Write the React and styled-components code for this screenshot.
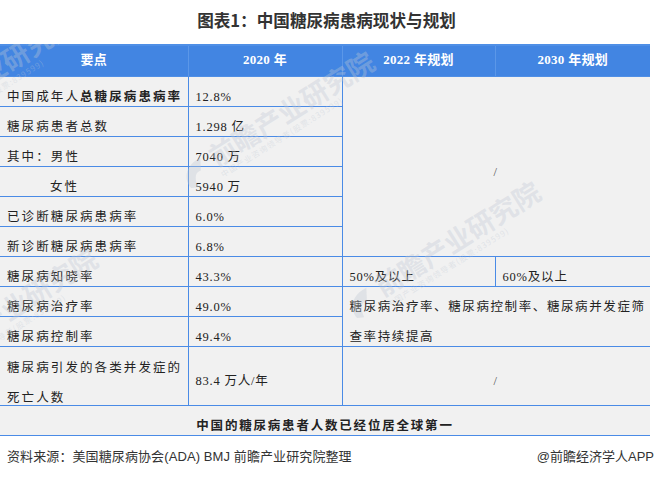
import React from 'react';
import styled, { createGlobalStyle } from 'styled-components';

const GlobalStyle = createGlobalStyle`
  html, body {
    margin: 0;
    padding: 0;
    background: #ffffff;
  }
`;

const rows = [
  { label: '中国成年人', strong: '总糖尿病患病率', value: '12.8%' },
  { label: '糖尿病患者总数', value: '1.298 亿' },
  { label: '其中：男性', value: '7040 万' },
  { label: '女性', value: '5940 万', indent: true },
  { label: '已诊断糖尿病患病率', value: '6.0%' },
  { label: '新诊断糖尿病患病率', value: '6.8%' },
];

const marks = [
  { x: -134, y: 16 },
  { x: 165, y: 54 },
  { x: 331, y: 184 },
  { x: -112, y: 251 },
];

const App = () => (
  <Page>
    <GlobalStyle />
    <Title>图表1：中国糖尿病患病现状与规划</Title>
    <TableWrap>
      <Table>
        <colgroup>
          <col width='188' />
          <col width='154' />
          <col width='153' />
          <col width='155' />
        </colgroup>
        <thead>
          <tr>
            <HeadCell>要点</HeadCell>
            <HeadCell>2020 年</HeadCell>
            <HeadCell>2022 年规划</HeadCell>
            <HeadCell>2030 年规划</HeadCell>
          </tr>
        </thead>
        <tbody>
          {rows.map((row, index) => (
            <tr key={row.label}>
              <Cell $indent={row.indent}>
                {row.label}
                {row.strong && <strong>{row.strong}</strong>}
              </Cell>
              <ValueCell>{row.value}</ValueCell>
              {index === 0 && (
                <SlashCell colSpan={2} rowSpan={6}>
                  /
                </SlashCell>
              )}
            </tr>
          ))}
          <tr>
            <Cell>糖尿病知晓率</Cell>
            <ValueCell>43.3%</ValueCell>
            <ValueCell>50%及以上</ValueCell>
            <ValueCell>60%及以上</ValueCell>
          </tr>
          <tr>
            <Cell>糖尿病治疗率</Cell>
            <ValueCell>49.0%</ValueCell>
            <NoteCell colSpan={2} rowSpan={2}>
              <LineBlock $height={53}>
                糖尿病治疗率、糖尿病控制率、糖尿病并发症筛查率持续提高
              </LineBlock>
            </NoteCell>
          </tr>
          <tr>
            <Cell>糖尿病控制率</Cell>
            <ValueCell>49.4%</ValueCell>
          </tr>
          <TallRow>
            <TallCell>
              <LineBlock $height={52}>糖尿病引发的各类并发症的死亡人数</LineBlock>
            </TallCell>
            <ValueCell>83.4 万人/年</ValueCell>
            <SlashCell colSpan={2}>/</SlashCell>
          </TallRow>
          <tr>
            <SummaryCell colSpan={4}>中国的糖尿病患者人数已经位居全球第一</SummaryCell>
          </tr>
        </tbody>
      </Table>
      <MarkLayer>
        {marks.map((mark) => (
          <Mark key={mark.x} $x={mark.x} $y={mark.y}>
            <MarkLogo viewBox='0 0 40 40'>
              <path d='M4 32C2 16 14 4 34 6L26 20C20 18 14 22 12 36Z' />
            </MarkLogo>
            <MarkText>
              <MarkName>前瞻产业研究院</MarkName>
              <MarkSub>中国产业咨询领导者(股票:839599)</MarkSub>
            </MarkText>
          </Mark>
        ))}
      </MarkLayer>
    </TableWrap>
    <Footer>
      <span>资料来源：美国糖尿病协会(ADA) BMJ 前瞻产业研究院整理</span>
      <Credit>@前瞻经济学人APP</Credit>
    </Footer>
  </Page>
);

export default App;

const Page = styled.div`
  width: 654px;
  height: 478px;
  overflow: hidden;
  background: #ffffff;
`;

const Title = styled.h1`
  margin: 0;
  height: 44px;
  text-align: center;
  padding-right: 1px;
  color: #333333;
  font: 700 16.6px/41px 'Noto Sans CJK SC', sans-serif;
`;

const TableWrap = styled.div`
  position: relative;
  width: 650px;
`;

const Table = styled.table`
  width: 650px;
  table-layout: fixed;
  border-collapse: collapse;
  background: #f1f1f1;
  color: #222222;
  font: 12.5px/18px 'Liberation Serif', 'Noto Sans CJK SC', serif;
  letter-spacing: 2.1px;
`;

const HeadCell = styled.th`
  height: 31px;
  padding: 0 0 1px;
  box-sizing: border-box;
  background: #4285e2;
  color: #ffffff;
  font: 700 13px/16px 'Liberation Serif', 'Noto Sans CJK SC', serif;
  letter-spacing: 0.3px;
  text-align: center;
  border: 1px solid #4f8fe6;
  border-top: 2px solid #4f8fe6;
  border-left: 0;
  border-right-color: #5b97e8;
  &:last-child {
    border-right: 0;
  }
`;

const Cell = styled.td`
  height: 30px;
  padding: 11px 0 0 ${(p) => (p.$indent ? '50px' : '7px')};
  box-sizing: border-box;
  white-space: nowrap;
  border: 1px solid #4a8be6;
  border-left: 0;
  &:last-child {
    border-right: 0;
  }
  strong {
    font-weight: 700;
  }
`;

const ValueCell = styled(Cell)`
  letter-spacing: 0.8px;
`;

const SlashCell = styled.td`
  padding: 11px 0 0;
  box-sizing: border-box;
  text-align: center;
  color: #555555;
  border: 1px solid #4a8be6;
  border-right: 0;
`;

const LineBlock = styled.div`
  height: ${(p) => p.$height}px;
  line-height: 30px;
`;

const NoteCell = styled.td`
  padding: 5px 0 0 7px;
  box-sizing: border-box;
  vertical-align: top;
  letter-spacing: 1.6px;
  border: 1px solid #4a8be6;
  border-right: 0;
`;

const TallRow = styled.tr`
  height: 59px;
`;

const TallCell = styled.td`
  padding: 6px 0 0 7px;
  box-sizing: border-box;
  vertical-align: top;
  border: 1px solid #4a8be6;
  border-left: 0;
`;

const SummaryCell = styled.td`
  height: 30px;
  padding: 11px 0 0;
  box-sizing: border-box;
  text-align: center;
  font-weight: 700;
  letter-spacing: 1.8px;
  border: 1px solid #4a8be6;
  border-left: 0;
  border-right: 0;
`;

const MarkLayer = styled.div`
  position: absolute;
  inset: 0;
  overflow: hidden;
  pointer-events: none;
`;

const Mark = styled.div`
  position: absolute;
  left: ${(p) => p.$x}px;
  top: ${(p) => p.$y}px;
  display: flex;
  align-items: center;
  gap: 4px;
  width: 240px;
  transform: rotate(-32deg);
  color: rgba(192, 200, 212, 0.36);
`;

const MarkLogo = styled.svg`
  flex: none;
  width: 32px;
  height: 32px;
  fill: currentColor;
`;

const MarkText = styled.div`
  display: flex;
  flex-direction: column;
  white-space: nowrap;
`;

const MarkName = styled.span`
  font: 700 27px/30px 'Noto Sans CJK SC', sans-serif;
`;

const MarkSub = styled.span`
  font: 8px/10px 'Noto Sans CJK SC', sans-serif;
  letter-spacing: 1px;
`;

const Footer = styled.div`
  display: flex;
  justify-content: space-between;
  width: 654px;
  box-sizing: border-box;
  padding: 13px 0 0 7px;
  color: #333333;
  font: 13px/16px 'Liberation Sans', 'Noto Sans CJK SC', sans-serif;
  letter-spacing: 0.1px;
`;

const Credit = styled.span`
  letter-spacing: 0;
`;
